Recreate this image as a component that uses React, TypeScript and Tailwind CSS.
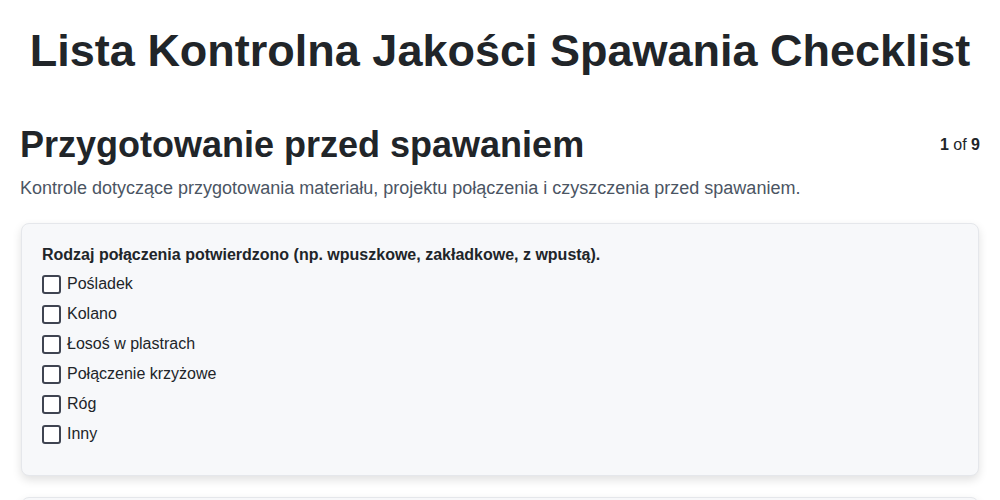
import React from 'react';

const options = ['Pośladek', 'Kolano', 'Łosoś w plastrach', 'Połączenie krzyżowe', 'Róg', 'Inny'];

function CheckItem({ label }: { label: string }) {
    return (
        <label className="flex h-[30px] items-center">
            <span className="block h-[19px] w-[19px] shrink-0 rounded-[3px] border-2 border-[#3f4451] bg-white" />
            <span className="ml-[6px] text-base text-[#212529]">{label}</span>
        </label>
    );
}

export default function App() {
    return (
        <div className="min-h-[500px] bg-white px-5 pt-7 text-[#212529]" style={{ fontFamily: '"Liberation Sans", Arial, sans-serif' }}>
            <h1 className="text-center text-[45px] font-bold leading-none">Lista Kontrolna Jakości Spawania Checklist</h1>

            {/* Section header */}
            <div className="mt-[52px] flex items-center justify-between">
                <h2 className="text-4xl font-bold">Przygotowanie przed spawaniem</h2>
                <div className="text-base">
                    <span className="font-bold">1</span> of <span className="font-bold">9</span>
                </div>
            </div>
            <p className="mt-[9px] text-lg text-[#4b5563]">
                Kontrole dotyczące przygotowania materiału, projektu połączenia i czyszczenia przed spawaniem.
            </p>

            <div className="mx-px mt-[21px] rounded-lg border border-[#e5e7eb] bg-[#f7f8fa] px-5 pb-[26px] pt-[19px] shadow-[0_4px_10px_rgba(0,0,0,0.12)]">
                <div className="text-base font-bold">Rodzaj połączenia potwierdzono (np. wpuszkowe, zakładkowe, z wpustą).</div>
                <div className="mt-[2px] flex flex-col">
                    {options.map((o) => (
                        <CheckItem key={o} label={o} />
                    ))}
                </div>
            </div>

            <div className="mx-px mt-[21px] h-[120px] rounded-lg border border-[#e5e7eb] bg-[#f7f8fa] shadow-[0_4px_10px_rgba(0,0,0,0.12)]" />
        </div>
    );
}
